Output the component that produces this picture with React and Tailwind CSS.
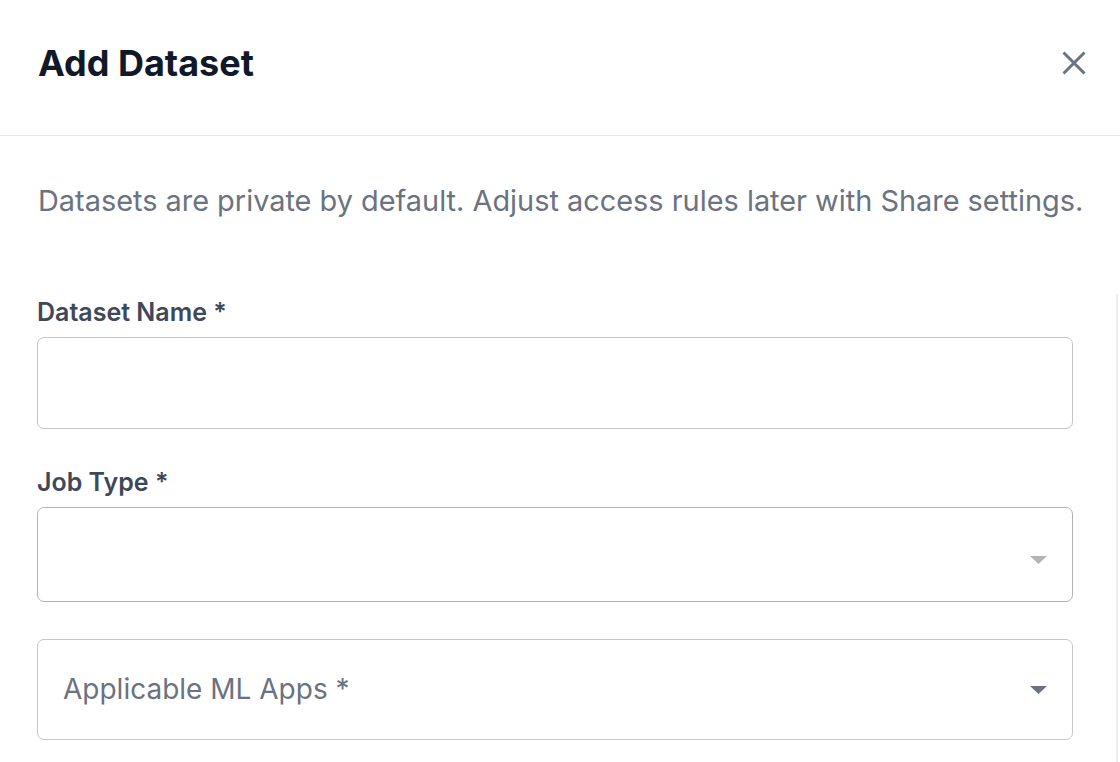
import React from "react";

const Caret = ({ color }) => (
  <svg width="17" height="8" viewBox="0 0 17 8" className="shrink-0">
    <path d="M0 0 L17 0 L8.5 8 Z" fill={color} />
  </svg>
);

const App = () => {
  return (
    <div
      className="w-[1120px] h-[762px] bg-white overflow-hidden flex flex-col"
      style={{ fontFamily: "Inter, 'Noto Sans', sans-serif" }}
    >
      <div className="h-[136px] shrink-0 flex items-center justify-between pl-[38px] pr-[34px] border-b border-[#e8e8ea]">
        <h1 className="text-[36px] leading-[44px] font-bold text-[#111827] -mt-[9px]">
          Add Dataset
        </h1>
        <button className="text-[#6b7280] -mt-[9px]">
          <svg width="24" height="24" viewBox="0 0 24 24">
            <path
              d="M1.5 1.5 L22.5 22.5 M22.5 1.5 L1.5 22.5"
              stroke="currentColor"
              strokeWidth="3"
              fill="none"
            />
          </svg>
        </button>
      </div>

      <p className="pl-[38px] pt-[47px] text-[28.9px] leading-[36px] text-[#6b7280]">
        Datasets are private by default. Adjust access rules later with Share settings.
      </p>

      <div className="flex flex-1 mt-[75px]">
        <div className="flex-1 pl-[37px] pr-[43px] pt-[3px] flex flex-col">
          <label className="text-[25px] leading-[30px] font-semibold text-[#3f4859]">
            Dataset Name *
          </label>
          <div className="mt-[10px] h-[92px] shrink-0 rounded-[7px] border border-[#c4c4c4]" />

          <label className="mt-[38px] text-[25px] leading-[30px] font-semibold text-[#3f4859]">
            Job Type *
          </label>
          <div className="mt-[10px] h-[95px] shrink-0 rounded-[7px] border border-[#b3b3b3] flex items-center justify-end pr-[25px]">
            <div className="mt-[10px]">
              <Caret color="#b4b4b8" />
            </div>
          </div>

          <div className="mt-[37px] h-[101px] shrink-0 rounded-[7px] border border-[#c8c8c8] flex items-center justify-between pl-[25px] pr-[25px]">
            <span className="text-[28px] leading-[34px] -mt-[2px] text-[#6b7280]">
              Applicable ML Apps *
            </span>
            <Caret color="#6b7280" />
          </div>
        </div>
        <div className="w-[2px] mr-[2px] bg-[#ececec]" />
      </div>
    </div>
  );
};

export default App;
